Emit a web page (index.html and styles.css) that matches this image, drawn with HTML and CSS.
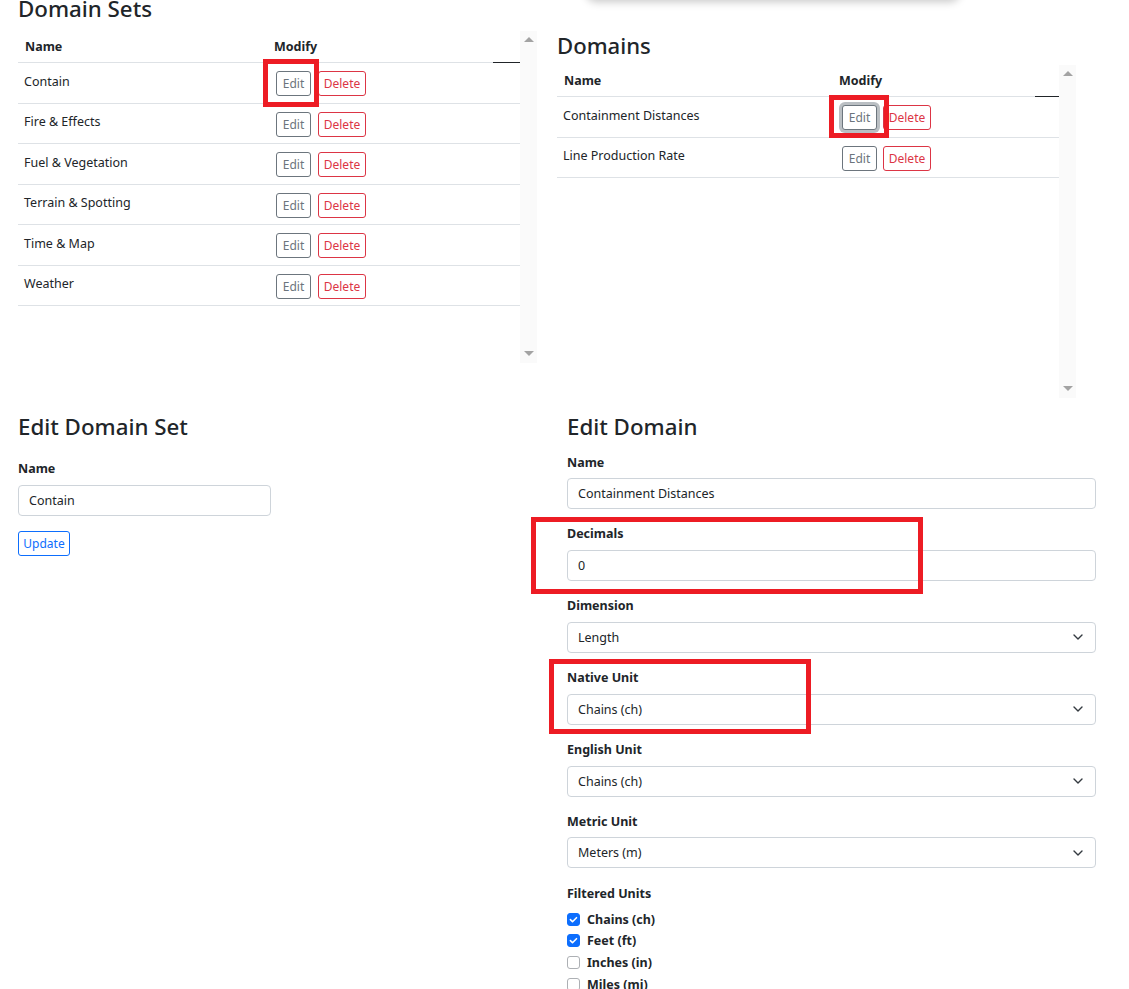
FILE: index.html
```html
<!DOCTYPE html>
<html lang="en">
<head>
<meta charset="utf-8">
<title>Domains</title>
<link rel="stylesheet" href="styles.css">
</head>
<body>
<div class="menu-shadow"></div>
<div class="page">
  <div class="top-row">
    <section class="col">
      <h4 class="heading">Domain Sets</h4>
      <div class="scroll">
        <div class="scroll-body">
          <table class="table table-sets">
            <colgroup><col class="c1"><col class="c2"><col class="c3"></colgroup>
            <thead><tr><th>Name</th><th>Modify</th><th class="th-end"></th></tr></thead>
            <tbody>
              <tr><td>Contain</td><td><div class="btns"><button class="btn btn-edit">Edit</button><button class="btn btn-del">Delete</button></div></td><td></td></tr>
              <tr><td>Fire &amp; Effects</td><td><div class="btns"><button class="btn btn-edit">Edit</button><button class="btn btn-del">Delete</button></div></td><td></td></tr>
              <tr><td>Fuel &amp; Vegetation</td><td><div class="btns"><button class="btn btn-edit">Edit</button><button class="btn btn-del">Delete</button></div></td><td></td></tr>
              <tr><td>Terrain &amp; Spotting</td><td><div class="btns"><button class="btn btn-edit">Edit</button><button class="btn btn-del">Delete</button></div></td><td></td></tr>
              <tr><td>Time &amp; Map</td><td><div class="btns"><button class="btn btn-edit">Edit</button><button class="btn btn-del">Delete</button></div></td><td></td></tr>
              <tr><td>Weather</td><td><div class="btns"><button class="btn btn-edit">Edit</button><button class="btn btn-del">Delete</button></div></td><td></td></tr>
            </tbody>
          </table>
        </div>
        <div class="scrollbar"><span class="arrow-up"></span><span class="arrow-down"></span></div>
      </div>
    </section>
    <section class="col col-right">
      <h4 class="heading heading-domains">Domains</h4>
      <div class="scroll scroll-tall">
        <div class="scroll-body">
          <table class="table table-domains">
            <colgroup><col class="d1"><col class="d2"><col class="d3"></colgroup>
            <thead><tr><th>Name</th><th>Modify</th><th class="th-end"></th></tr></thead>
            <tbody>
              <tr><td>Containment Distances</td><td><div class="btns btns-right"><button class="btn btn-edit is-focus">Edit</button><button class="btn btn-del">Delete</button></div></td><td></td></tr>
              <tr><td>Line Production Rate</td><td><div class="btns btns-right"><button class="btn btn-edit">Edit</button><button class="btn btn-del">Delete</button></div></td><td></td></tr>
            </tbody>
          </table>
        </div>
        <div class="scrollbar"><span class="arrow-up"></span><span class="arrow-down"></span></div>
      </div>
    </section>
  </div>

  <div class="bottom-row">
    <section class="col">
      <h4 class="heading heading-form">Edit Domain Set</h4>
      <div class="form-left">
        <label class="label label-left">Name</label>
        <div class="input input-short">Contain</div>
        <button class="btn btn-update">Update</button>
      </div>
    </section>
    <section class="col-form">
      <h4 class="heading heading-form">Edit Domain</h4>
      <div class="group">
        <label class="label">Name</label>
        <div class="input">Containment Distances</div>
      </div>
      <div class="group">
        <label class="label">Decimals</label>
        <div class="input">0</div>
      </div>
      <div class="group">
        <label class="label">Dimension</label>
        <div class="input select">Length<svg class="chev" width="10" height="6" viewBox="0 0 10 6"><path d="M1 1l4 4 4-4" fill="none" stroke="#343a40" stroke-width="1.4" stroke-linecap="round" stroke-linejoin="round"/></svg></div>
      </div>
      <div class="group">
        <label class="label">Native Unit</label>
        <div class="input select">Chains (ch)<svg class="chev" width="10" height="6" viewBox="0 0 10 6"><path d="M1 1l4 4 4-4" fill="none" stroke="#343a40" stroke-width="1.4" stroke-linecap="round" stroke-linejoin="round"/></svg></div>
      </div>
      <div class="group">
        <label class="label">English Unit</label>
        <div class="input select">Chains (ch)<svg class="chev" width="10" height="6" viewBox="0 0 10 6"><path d="M1 1l4 4 4-4" fill="none" stroke="#343a40" stroke-width="1.4" stroke-linecap="round" stroke-linejoin="round"/></svg></div>
      </div>
      <div class="group">
        <label class="label">Metric Unit</label>
        <div class="input select">Meters (m)<svg class="chev" width="10" height="6" viewBox="0 0 10 6"><path d="M1 1l4 4 4-4" fill="none" stroke="#343a40" stroke-width="1.4" stroke-linecap="round" stroke-linejoin="round"/></svg></div>
      </div>
      <div class="group-checks">
        <label class="label label-checks">Filtered Units</label>
        <div class="check"><span class="box checked"><svg width="13" height="13" viewBox="0 0 13 13"><path d="M3.4 6.6l2.1 2.1 4-4" fill="none" stroke="#fff" stroke-width="1.6" stroke-linecap="round" stroke-linejoin="round"/></svg></span><span>Chains (ch)</span></div>
        <div class="check"><span class="box checked"><svg width="13" height="13" viewBox="0 0 13 13"><path d="M3.4 6.6l2.1 2.1 4-4" fill="none" stroke="#fff" stroke-width="1.6" stroke-linecap="round" stroke-linejoin="round"/></svg></span><span>Feet (ft)</span></div>
        <div class="check"><span class="box"></span><span>Inches (in)</span></div>
        <div class="check"><span class="box"></span><span>Miles (mi)</span></div>
      </div>
    </section>
  </div>
</div>

<div class="mark mark-1"></div>
<div class="mark mark-2"></div>
<div class="mark mark-3"></div>
<div class="mark mark-4"></div>
</body>
</html>
```

FILE: styles.css
```css
* { box-sizing: border-box; }
html, body { margin: 0; padding: 0; background: #fff; }
body {
  font-family: "Noto Sans", "Open Sans", sans-serif;
  font-size: 12.5px;
  color: #212529;
  width: 1129px;
  height: 989px;
  overflow: hidden;
  position: relative;
}

.menu-shadow {
  position: absolute;
  left: 586px;
  top: -20px;
  width: 374px;
  height: 20px;
  background: #fff;
  border-radius: 10px;
  box-shadow: 0 2px 9px rgba(0, 0, 0, 0.22);
}

.page { padding-left: 18px; margin-top: -5px; }

.top-row { display: flex; gap: 20px; }
.col { width: 519px; }
.col-right { padding-top: 36px; }

.heading {
  font-size: 22.3px;
  font-weight: 500;
  line-height: 28px;
  margin: 0 0 8px;
}
.heading-domains { font-size: 22.1px; margin-bottom: 6px; }

.scroll { display: flex; height: 332px; }
.scroll-tall { height: 333px; }
.scroll-body { width: 502px; }
.scrollbar {
  width: 17px;
  background: #fafafa;
  display: flex;
  flex-direction: column;
  justify-content: space-between;
  align-items: center;
  padding: 6px 0 7px;
}
.arrow-up, .arrow-down { width: 0; height: 0; border-left: 5px solid transparent; border-right: 5px solid transparent; }
.arrow-up { border-bottom: 5px solid #a3a3a3; }
.arrow-down { border-top: 5px solid #a3a3a3; }

.table { border-collapse: collapse; table-layout: fixed; width: 502px; }
.c1 { width: 249px; } .c2 { width: 226px; } .c3 { width: 27px; }
.d1 { width: 275px; } .d2 { width: 203px; } .d3 { width: 24px; }
.table th {
  text-align: left;
  font-weight: 700;
  line-height: 19.5px;
  padding: 5.5px 6px 6px 7px;
  border-bottom: 1px solid #dee2e6;
}
.table th.th-end { border-bottom-color: #212529; }
.table td {
  line-height: 19.5px;
  padding: 8px 6px 6.5px;
  vertical-align: top;
  border-bottom: 1px solid #dee2e6;
}
.table td:first-child { padding-top: 8.5px; padding-bottom: 6px; }

.btns { display: flex; gap: 7px; height: 25px; margin-left: 3px; }
.btns-right { gap: 6px; margin-left: 4px; }
.btn {
  font-family: inherit;
  font-size: 12px;
  line-height: 19px;
  height: 25px;
  padding: 2px 0;
  border: 1px solid;
  border-radius: 3px;
  background: #fff;
  text-align: center;
}
.btn-edit { width: 35px; color: #6c757d; border-color: #6c757d; }
.btn-del { width: 48px; color: #dc3545; border-color: #dc3545; }
.btn-edit.is-focus { box-shadow: 0 0 0 3px rgba(130, 138, 145, 0.55); }
.btn-update { width: 52px; color: #0d6efd; border-color: #0d6efd; margin-top: 15px; display: block; }

.bottom-row { display: flex; gap: 30px; margin-top: 15px; }
.heading-form { margin-bottom: 11.5px; }
.form-left { padding-top: 6px; }
.col-form { width: 529px; }

.label { display: block; font-weight: 700; line-height: 19px; margin-bottom: 6.5px; }
.label-left { margin-bottom: 7.5px; }
.group { margin-bottom: 15.4px; }

.input {
  height: 31px;
  border: 1px solid #ced4da;
  border-radius: 4px;
  padding: 0 10px;
  line-height: 29px;
  color: #212529;
  background: #fff;
}
.input-short { width: 253px; }
.select { display: flex; justify-content: space-between; align-items: center; padding-right: 12px; }
.chev { flex: none; }

.label-checks { margin-bottom: 5.5px; }
.check {
  display: flex;
  align-items: center;
  gap: 7px;
  height: 21.7px;
  font-weight: 700;
}
.box {
  width: 13px;
  height: 13px;
  border: 1px solid #adb0b4;
  border-radius: 3px;
  flex: none;
  display: block;
}
.box.checked { background: #0d6efd; border-color: #0d6efd; position: relative; }
.box.checked svg { position: absolute; left: -1px; top: -1px; }

.mark { position: absolute; border: 5px solid #ed1c24; }
.mark-1 { left: 263px; top: 59px; width: 56px; height: 48px; }
.mark-2 { left: 829px; top: 95px; width: 60px; height: 43px; }
.mark-3 { left: 531px; top: 517px; width: 392px; height: 77px; }
.mark-4 { left: 549px; top: 659px; width: 262px; height: 75px; }
```
